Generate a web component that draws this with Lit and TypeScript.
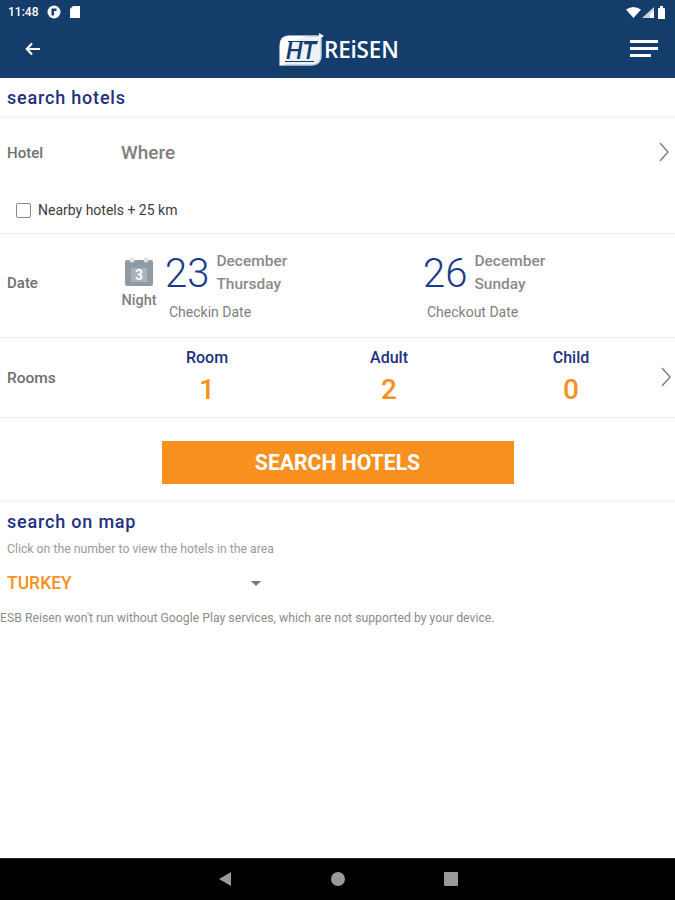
import { LitElement, html, css } from "lit";
import { customElement } from "lit/decorators.js";

@customElement("app-root")
export class AppRoot extends LitElement {
  static styles = css`
    :host { display: block; width: 675px; height: 900px; background: #fff; font-family: Roboto, "Liberation Sans", sans-serif; overflow: hidden; }
    .page { display: flex; flex-direction: column; height: 900px; }
    svg { display: block; flex: none; }
    .top { background: #143d6c; height: 78px; flex: none; display: flex; flex-direction: column; }
    .status { height: 20px; display: flex; align-items: center; padding: 4px 9px 0 8px; color: #fff; font-size: 12px; font-weight: 500; gap: 9px; box-sizing: border-box; }
    .status .sp { flex: 1; }
    .status .right { display: flex; gap: 1px; align-items: center; }
    .head { flex: 1; display: flex; align-items: center; justify-content: space-between; padding: 0 17px 0 25px; position: relative; }
    .logo { position: absolute; left: 278px; top: 12px; display: flex; align-items: center; gap: 0; color: #fff; font-family: "Open Sans", sans-serif; font-size: 22.5px; font-weight: 600; letter-spacing: -0.2px; line-height: 1; }
    .title { color: #22307f; font-size: 18px; font-weight: 500; letter-spacing: 0.8px; padding-left: 7px; }
    .t1 { height: 37px; flex: none; display: flex; align-items: center; box-sizing: border-box; padding-top: 1px; }
    .thick { height: 4px; background: #f7f7f7; flex: none; }
    .hotel { height: 66px; flex: none; display: flex; align-items: center; padding: 0 7px; position: relative; }
    .lab { color: #6f6f6f; font-size: 15px; font-weight: 500; width: 114px; flex: none; padding-top: 1px; }
    .where { color: #808080; font-size: 19px; font-weight: 500; flex: 1; }
    .near { height: 49px; flex: none; display: flex; align-items: flex-start; padding: 18px 0 0 16px; box-sizing: border-box; gap: 7px; font-size: 14px; color: #3c3c3c; border-bottom: 1px solid #e6e6e6; }
    .box { width: 15px; height: 15px; border: 1.5px solid #8a8a8a; border-radius: 2px; box-sizing: border-box; }
    .near span { line-height: 15px; }
    .date { height: 104px; flex: none; display: flex; border-bottom: 1px solid #e6e6e6; box-sizing: border-box; padding-left: 7px; align-items: center; }
    .date .lab { width: 116px; padding-top: 0; padding-bottom: 5px; }
    .night { width: 32px; display: flex; flex-direction: column; align-items: center; color: #808080; font-size: 14.5px; font-weight: 500; gap: 5px; margin-top: -6px; }
    .dt { display: flex; flex-direction: column; margin-top: -2px; }
    .dt1 { margin-left: 10px; width: 258px; }
    .dtop { display: flex; gap: 8px; align-items: center; }
    .mons { margin-top: -2px; margin-left: -1px; }
    .num { color: #1c3a8c; font-size: 40px; font-weight: 300; line-height: 48px; }
    .mon { color: #8a8a8a; font-size: 15.5px; font-weight: 500; line-height: 23px; }
    .cap { color: #808080; font-size: 14px; margin: 6px 0 0 4px; }
    .rooms { height: 80px; flex: none; display: flex; align-items: center; border-bottom: 1px solid #e6e6e6; box-sizing: border-box; padding: 0 7px; position: relative; }
    .rooms .lab { width: 109px; font-size: 15.5px; }
    .col { width: 182px; display: flex; flex-direction: column; align-items: center; color: #22307f; font-size: 16px; font-weight: 500; margin-top: 0; }
    .col span { line-height: 20px; }
    .col b { color: #f7901e; font-size: 28px; font-weight: 500; line-height: 34px; margin-top: 5px; }
    .btnrow { height: 82px; flex: none; display: flex; justify-content: center; align-items: flex-start; padding-top: 23px; box-sizing: border-box; }
    .btn { width: 352px; height: 43px; background: #f7901e; color: #fff; font-size: 21.2px; font-weight: 700; display: flex; align-items: center; justify-content: center; }
    .sep { height: 2px; background: #f5f5f5; flex: none; }
    .t2 { height: 37px; flex: none; display: flex; align-items: center; box-sizing: border-box; padding-top: 1px; }
    .hint { color: #9a9a9a; font-size: 12.25px; padding-left: 7px; line-height: 14px; margin-top: 3px; }
    .sel { display: flex; align-items: center; padding-left: 7px; height: 34px; margin-top: 10px; }
    .sel b { color: #f7901e; font-size: 17.5px; font-weight: 500; width: 244px; }
    .msg { color: #8c8c8c; font-size: 12.25px; line-height: 14px; margin-top: 11px; white-space: nowrap; }
    .spacer { flex: 1; }
    .nav { height: 42px; background: #000; flex: none; display: flex; align-items: center; justify-content: center; gap: 99px; box-sizing: border-box; border-top: 1px solid #222; padding: 0 0 1px 1px; }
    .chev { margin-left: auto; }
    .chevr { position: absolute; right: 4px; top: 29px; }
    .ht { font-family: Roboto, sans-serif; font-size: 23px; font-weight: 500; font-style: italic; fill: #143d6c; }
    .three { font-family: Roboto, sans-serif; font-size: 14px; font-weight: 700; fill: #fff; }
  `;

  render() {
    return html`<div class="page">
      <div class="top">
        <div class="status">
          <span>11:48</span>
          <svg width="14" height="14" viewBox="0 0 14 14"><circle cx="7" cy="7" r="6.500" fill="#fff"/><path d="M4.500 3.500h2.500v7h-2.500z" fill="#143d6c"/><path d="M7 3.500h2.500v2.500h-2.500z" fill="#143d6c"/></svg>
          <svg width="12" height="14" viewBox="0 0 12 14" style="margin-left:-1px"><path d="M4 1h7v12H1V4z" fill="#fff"/></svg>
          <span class="sp"></span>
          <div class="right">
            <svg width="15" height="11" viewBox="0 0 15 11"><path d="M0 2.500Q7.500-2.500 15 2.500L7.500 11z" fill="#fff"/></svg>
            <svg width="12" height="11" viewBox="0 0 12 11"><path d="M12 0v11H0z" fill="#c9d1da"/><path d="M12 4v7H8V7z" fill="#fff"/></svg>
            <svg width="9" height="13" viewBox="0 0 9 13" style="margin-left:2px"><path d="M1 3q0-1 1-1h1V0h3v2h1q1 0 1 1v10H1z" fill="#fff"/></svg>
          </div>
        </div>
        <div class="head">
          <svg width="16" height="14" viewBox="0 0 16 14"><path d="M7 1.500L1.800 7 7 12.500M2 7h13" fill="none" stroke="#fff" stroke-width="2.200"/></svg>
          <div class="logo">
            <svg width="46" height="36" viewBox="0 0 46 36">
              <path d="M11 4H43V23Q43 33 33 33H2V14Q2 4 11 4Z" fill="#eef2f7" stroke="#c5d0de" stroke-width="1.400"/>
              <path d="M2 33V14Q2 4 11 4H30Q11 6 6 33Z" fill="#fff"/>
              <path d="M41 1l5 3-5 3z" fill="#fff"/>
              <text x="8" y="27" class="ht" textLength="30" lengthAdjust="spacingAndGlyphs">HT</text>
              <path d="M10 9.500H40" stroke="#143d6c" stroke-width="1"/>
              <path d="M7 29.500H36" stroke="#143d6c" stroke-width="1"/>
            </svg>
            <span>REiSEN</span>
          </div>
          <svg width="28" height="18" viewBox="0 0 28 18"><path d="M0 1.500h28M0 8.500h28M0 15.500h21" stroke="#fff" stroke-width="3"/></svg>
        </div>
      </div>
      <div class="t1"><span class="title">search hotels</span></div>
      <div class="thick"></div>
      <div class="hotel">
        <span class="lab">Hotel</span><span class="where">Where</span>
        <svg width="10" height="20" viewBox="0 0 10 20" class="chev" style="margin-right:-1px"><path d="M1 1l8 9-8 9" fill="none" stroke="#777" stroke-width="1.300"/></svg>
      </div>
      <div class="near"><div class="box"></div><span>Nearby hotels + 25 km</span></div>
      <div class="date">
        <span class="lab">Date</span>
        <div class="night">
          <svg width="30" height="30" viewBox="0 0 30 30"><rect x="1" y="3" width="28" height="26" rx="2" fill="#8e9aa4"/><rect x="7" y="11" width="16" height="14" fill="#a9b2b9"/><circle cx="8" cy="3" r="2.500" fill="#dfe3e6"/><circle cx="22" cy="3" r="2.500" fill="#dfe3e6"/><text x="15" y="23" text-anchor="middle" class="three">3</text></svg>
          <span>Night</span>
        </div>
        <div class="dt dt1">
          <div class="dtop"><span class="num">23</span><div class="mons"><div class="mon">December</div><div class="mon">Thursday</div></div></div>
          <div class="cap">Checkin Date</div>
        </div>
        <div class="dt">
          <div class="dtop"><span class="num">26</span><div class="mons"><div class="mon">December</div><div class="mon">Sunday</div></div></div>
          <div class="cap">Checkout Date</div>
        </div>
      </div>
      <div class="rooms">
        <span class="lab">Rooms</span>
        <div class="col"><span>Room</span><b>1</b></div>
        <div class="col"><span>Adult</span><b>2</b></div>
        <div class="col"><span>Child</span><b>0</b></div>
        <svg width="10" height="20" viewBox="0 0 10 20" class="chevr"><path d="M1 1l8 9-8 9" fill="none" stroke="#777" stroke-width="1.300"/></svg>
      </div>
      <div class="btnrow"><div class="btn">SEARCH HOTELS</div></div>
      <div class="sep"></div>
      <div class="t2"><span class="title">search on map</span></div>
      <div class="hint">Click on the number to view the hotels in the area</div>
      <div class="sel"><b>TURKEY</b><svg width="10" height="5" viewBox="0 0 10 5"><path d="M0 0h10L5 5z" fill="#777"/></svg></div>
      <div class="msg">ESB Reisen won't run without Google Play services, which are not supported by your device.</div>
      <div class="spacer"></div>
      <div class="nav">
        <svg width="14" height="16" viewBox="0 0 14 16" style="margin-left:-1px"><path d="M13 1v14L1 8z" fill="#9a9a9a"/></svg>
        <svg width="14" height="14" viewBox="0 0 14 14"><circle cx="7" cy="7" r="7" fill="#9a9a9a"/></svg>
        <svg width="14" height="14" viewBox="0 0 14 14"><rect width="14" height="14" rx="1" fill="#9a9a9a"/></svg>
      </div>
    </div>`;
  }
}
